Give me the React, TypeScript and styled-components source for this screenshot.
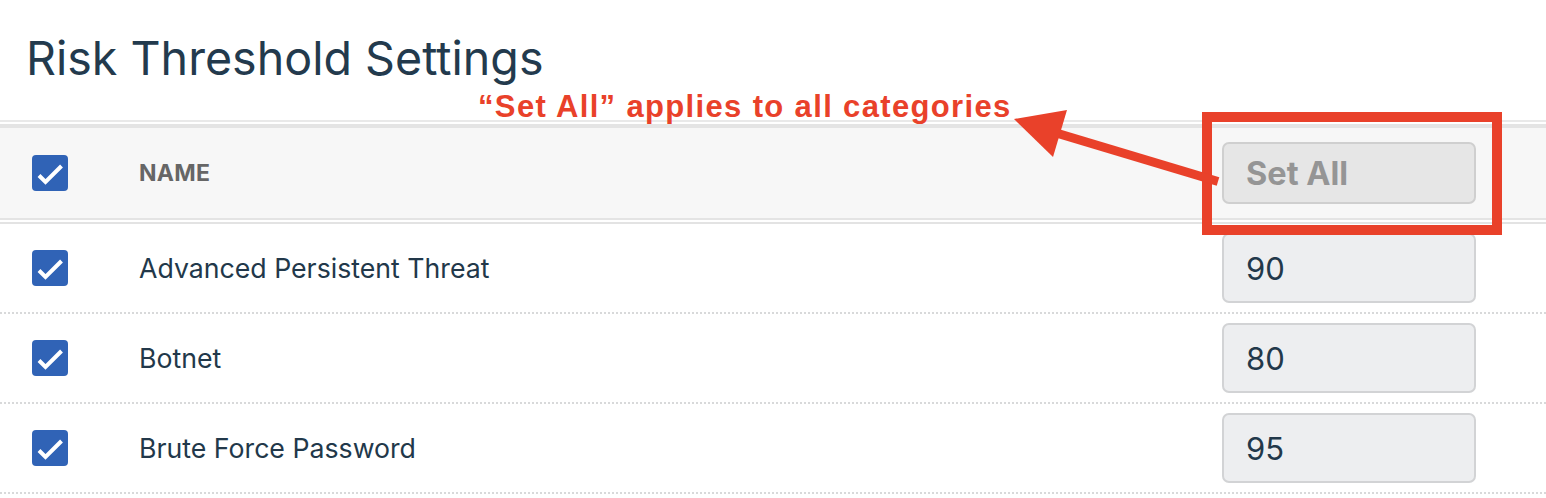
import React from "react";
import styled, { createGlobalStyle } from "styled-components";

const GlobalStyle = createGlobalStyle`
  html, body {
    margin: 0;
    padding: 0;
    background: #ffffff;
  }
  body {
    font-family: Inter, "Noto Sans", sans-serif;
    color: #22384a;
  }
`;

const Page = styled.div`
  position: relative;
  width: 1546px;
  height: 498px;
  overflow: hidden;
`;

const Title = styled.h1`
  margin: 0;
  padding: 30px 0 0 26px;
  height: 120px;
  box-sizing: border-box;
  font-size: 46.6px;
  line-height: 57px;
  font-weight: 400;
  color: #233a4d;
`;

const HeaderWrap = styled.div`
  border-top: 2px solid #e9e9e9;
  border-bottom: 2px solid #e3e3e3;
  padding: 2px 0;
`;

const Row = styled.div<{ $header?: boolean }>`
  display: flex;
  align-items: center;
  box-sizing: border-box;
  padding: 0 70px 0 32px;
  height: ${(p) => (p.$header ? "96px" : "90px")};
  background: ${(p) => (p.$header ? "#f7f7f7" : "#ffffff")};
  border-top: ${(p) => (p.$header ? "4px solid #e4e4e4" : "none")};
  border-bottom: ${(p) =>
    p.$header ? "2px solid #e4e4e4" : "2px dotted #d8d9da"};
`;

const Box = styled.span`
  display: inline-flex;
  width: 36px;
  height: 36px;
  flex: none;
  border-radius: 4px;
  background: #3063b6;
`;

const Name = styled.div<{ $header?: boolean }>`
  flex: 1;
  margin-left: 71px;
  font-size: ${(p) => (p.$header ? "23px" : "26.7px")};
  font-weight: ${(p) => (p.$header ? 700 : 400)};
  color: ${(p) => (p.$header ? "#666666" : "#22384a")};
  letter-spacing: ${(p) => (p.$header ? "0.3px" : "0")};
`;

const SetAllButton = styled.button`
  width: 254px;
  height: 62px;
  box-sizing: border-box;
  padding: 0 0 0 22px;
  text-align: left;
  background: #e6e6e6;
  border: 2px solid #cfcfcf;
  border-radius: 7px;
  font-family: Inter, "Noto Sans", sans-serif;
  font-size: 32.5px;
  font-weight: 700;
  color: #959595;
`;

const ValueInput = styled.input`
  width: 254px;
  height: 70px;
  box-sizing: border-box;
  padding: 0 0 0 22px;
  background: #edeef0;
  border: 2px solid #d2d3d5;
  border-radius: 7px;
  font-family: Inter, "Noto Sans", sans-serif;
  font-size: 31px;
  color: #22384a;
  outline: none;
`;

const Callout = styled.div`
  position: absolute;
  left: 478px;
  top: 91px;
  font-family: "Liberation Sans", Arial, sans-serif;
  font-weight: 700;
  font-size: 31px;
  line-height: 31px;
  letter-spacing: 1.35px;
  color: #e9412a;
  white-space: nowrap;
`;

const Highlight = styled.div`
  position: absolute;
  left: 1202px;
  top: 112px;
  width: 300px;
  height: 123px;
  box-sizing: border-box;
  border: 10px solid #e9412a;
`;

const ArrowSvg = styled.svg`
  position: absolute;
  left: 1000px;
  top: 100px;
`;

const Check = () => (
  <Box>
    <svg width="36" height="36" viewBox="0 0 36 36">
      <path
        d="M7 20.5 L13.5 27 L29.5 11"
        fill="none"
        stroke="#ffffff"
        strokeWidth="4"
      />
    </svg>
  </Box>
);

const rows = [
  { name: "Advanced Persistent Threat", value: "90" },
  { name: "Botnet", value: "80" },
  { name: "Brute Force Password", value: "95" },
];

export default function App() {
  return (
    <Page>
      <GlobalStyle />
      <Title>Risk Threshold Settings</Title>
      <HeaderWrap>
        <Row $header>
          <Check />
          <Name $header>NAME</Name>
          <SetAllButton>Set All</SetAllButton>
        </Row>
      </HeaderWrap>
      {rows.map((r) => (
        <Row key={r.name}>
          <Check />
          <Name>{r.name}</Name>
          <ValueInput readOnly value={r.value} />
        </Row>
      ))}

      <Callout>“Set All” applies to all categories</Callout>
      <Highlight />
      <ArrowSvg width="230" height="100" viewBox="0 0 230 100">
        <line
          x1="218"
          y1="81.5"
          x2="58"
          y2="33.5"
          stroke="#e9412a"
          strokeWidth="9"
        />
        <polygon points="14,19 67,10 53,57" fill="#e9412a" />
      </ArrowSvg>
    </Page>
  );
}
